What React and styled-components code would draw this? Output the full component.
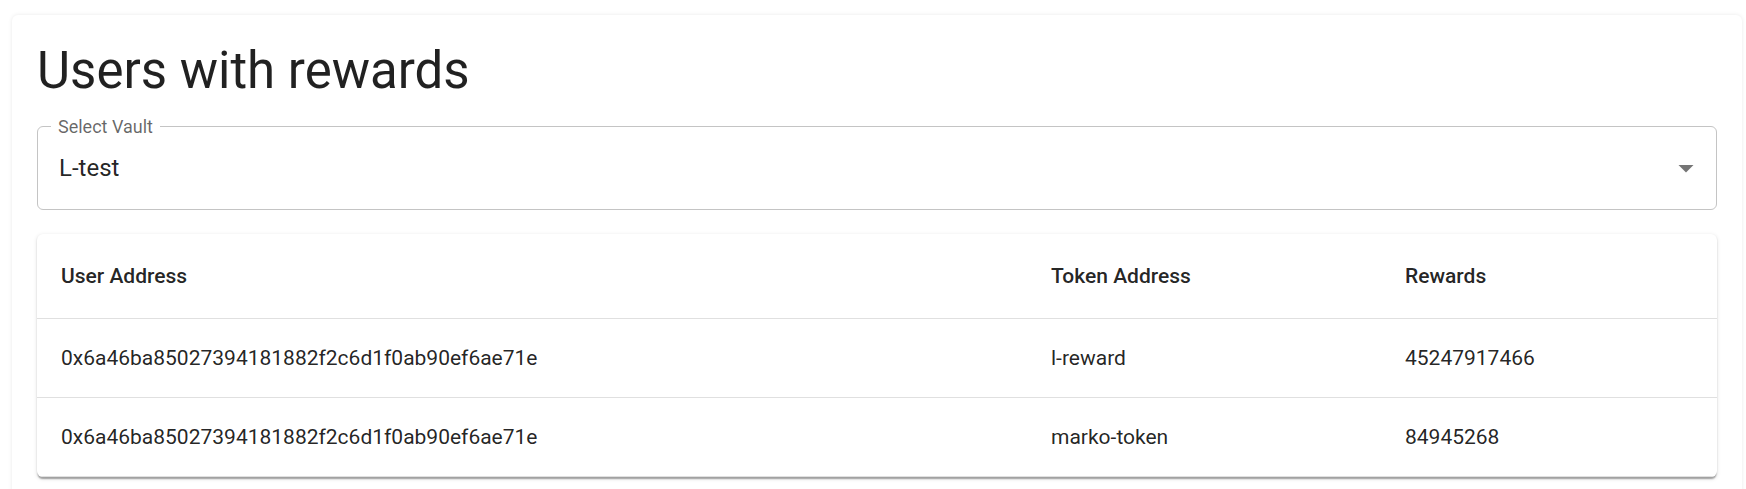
import React from 'react';
import styled, { createGlobalStyle } from 'styled-components';

const rows = [
  { user: '0x6a46ba85027394181882f2c6d1f0ab90ef6ae71e', token: 'l-reward', rewards: '45247917466' },
  { user: '0x6a46ba85027394181882f2c6d1f0ab90ef6ae71e', token: 'marko-token', rewards: '84945268' },
];

const GlobalStyle = createGlobalStyle`
  html, body {
    margin: 0;
    padding: 0;
    background: #ffffff;
    overflow: hidden;
  }
  body {
    font-family: Roboto, 'Liberation Sans', Arial, sans-serif;
    color: rgba(0, 0, 0, 0.87);
  }
`;

const Page = styled.div`
  padding: 15px 4px 0 12px;
`;

const Panel = styled.section`
  background: #ffffff;
  border-radius: 6px;
  box-shadow: 0 0 4px rgba(0, 0, 0, 0.09);
  padding: 24px 25px 24px 25px;
`;

const Title = styled.h4`
  margin: 0;
  font-size: 51px;
  font-weight: 400;
  line-height: 63px;
  letter-spacing: 0;
  color: rgba(0, 0, 0, 0.87);
`;

const SelectBox = styled.div`
  position: relative;
  margin-top: 24px;
  height: 84px;
  box-sizing: border-box;
  border: 1px solid #c4c4c4;
  border-radius: 6px;
  display: flex;
  align-items: center;
  padding: 0 12px 0 21px;
  cursor: pointer;
`;

/* floating label sits over the outline, like the notched outline */
const FloatLabel = styled.span`
  position: absolute;
  top: -9px;
  left: 13px;
  padding: 0 7px;
  background: #ffffff;
  font-size: 18px;
  line-height: 18px;
  color: rgba(0, 0, 0, 0.6);
`;

const SelectValue = styled.span`
  flex: 1;
  font-size: 24px;
  line-height: 34.5px;
  color: rgba(0, 0, 0, 0.87);
`;

const Arrow = styled.svg`
  width: 36px;
  height: 36px;
  fill: rgba(0, 0, 0, 0.54);
  flex: none;
`;

const TableCard = styled.div`
  margin-top: 24px;
  background: #ffffff;
  border-radius: 6px;
  overflow: hidden;
  box-shadow: 0 3px 1.5px -1.5px rgba(0, 0, 0, 0.2), 0 1.5px 1.5px 0 rgba(0, 0, 0, 0.14),
    0 1.5px 4.5px 0 rgba(0, 0, 0, 0.12);
`;

const Table = styled.table`
  width: 100%;
  border-collapse: collapse;
  table-layout: fixed;
`;

const HeadCell = styled.th`
  text-align: left;
  padding: 24px;
  font-size: 21px;
  font-weight: 500;
  line-height: 36px;
  color: rgba(0, 0, 0, 0.87);
  border-bottom: 1px solid #e0e0e0;
`;

const Cell = styled.td`
  padding: 24px;
  font-size: 21px;
  font-weight: 400;
  line-height: 30px;
  color: rgba(0, 0, 0, 0.87);
  border-bottom: 1px solid #e0e0e0;
  white-space: nowrap;
`;

export default function App() {
  return (
    <Page>
      <GlobalStyle />
      <Panel>
        <Title>Users with rewards</Title>
        <SelectBox>
          <FloatLabel>Select Vault</FloatLabel>
          <SelectValue>L-test</SelectValue>
          <Arrow viewBox="0 0 24 24">
            <path d="M7 10l5 5 5-5z" />
          </Arrow>
        </SelectBox>
        <TableCard>
          <Table>
            <colgroup>
              <col style={{ width: 990 }} />
              <col style={{ width: 354 }} />
              <col />
            </colgroup>
            <thead>
              <tr>
                <HeadCell>User Address</HeadCell>
                <HeadCell>Token Address</HeadCell>
                <HeadCell>Rewards</HeadCell>
              </tr>
            </thead>
            <tbody>
              {rows.map((r, i) => (
                <tr key={i}>
                  <Cell>{r.user}</Cell>
                  <Cell>{r.token}</Cell>
                  <Cell>{r.rewards}</Cell>
                </tr>
              ))}
            </tbody>
          </Table>
        </TableCard>
      </Panel>
    </Page>
  );
}
